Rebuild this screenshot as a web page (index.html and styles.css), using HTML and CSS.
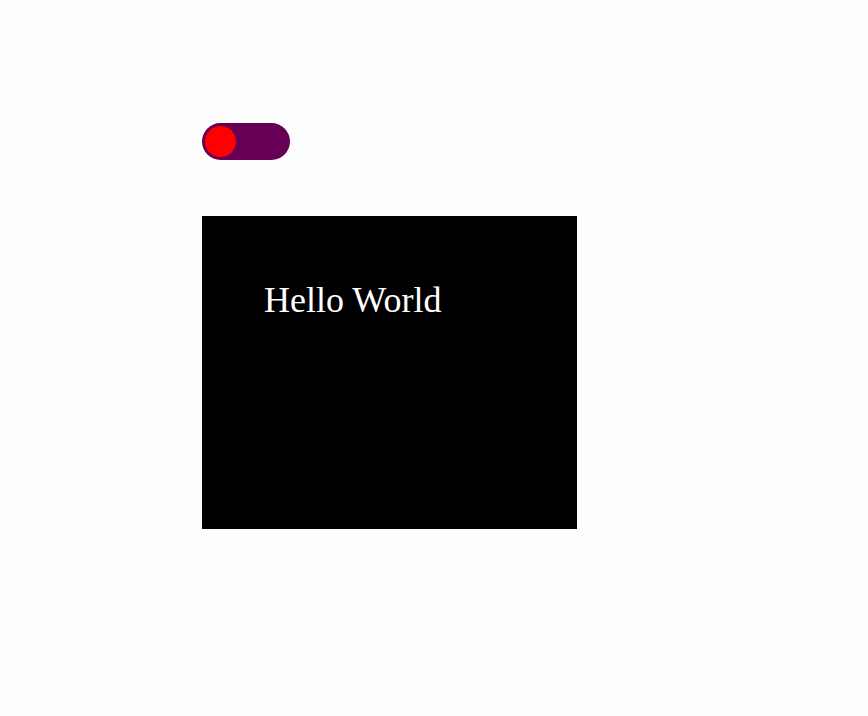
FILE: index.html
```html
<!DOCTYPE html>
<html>
<head>
<meta charset="utf-8">
<link rel="stylesheet" href="styles.css">
</head>
<body>
<div class="page">
  <div class="toggle"><span class="knob"></span></div>
  <div class="box"><p class="hello">Hello World</p></div>
</div>
</body>
</html>
```
FILE: styles.css
```css
html, body { margin: 0; padding: 0; background: #fdfdfd; }
.page {
  padding: 123px 0 0 202px;
  display: flex;
  flex-direction: column;
  align-items: flex-start;
}
.toggle {
  width: 88px;
  height: 37px;
  box-sizing: border-box;
  border-radius: 19px;
  background: #660055;
  display: flex;
  align-items: center;
  padding-left: 3px;
}
.knob {
  width: 31px;
  height: 31px;
  border-radius: 50%;
  background: #ff0000;
}
.box {
  margin-top: 56px;
  width: 375px;
  height: 313px;
  background: #000;
  box-sizing: border-box;
  padding: 64px 0 0 62px;
}
.hello {
  margin: 0;
  color: #fff;
  font-family: "Liberation Serif", serif;
  font-size: 36px;
  line-height: 41px;
}
```
